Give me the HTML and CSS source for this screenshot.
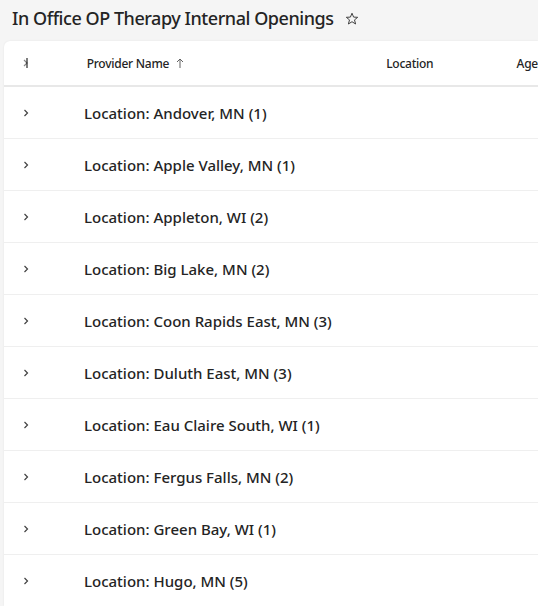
FILE: index.html
```html
<!DOCTYPE html>
<html>
<head>
<meta charset="utf-8">
<link rel="stylesheet" href="styles.css">
</head>
<body>
<div class="page">
  <div class="titlebar">
    <h1 class="title">In Office OP Therapy Internal Openings</h1>
    <svg class="star" width="14" height="14" viewBox="0 0 14 14"><path d="M7 1.2 L8.6 5.1 L12.7 5.3 L9.5 7.9 L10.6 12 L7 9.7 L3.4 12 L4.5 7.9 L1.3 5.3 L5.4 5.1 Z" fill="none" stroke="#424242" stroke-width="1" stroke-linejoin="round"/></svg>
  </div>
  <div class="card">
    <div class="header">
      <div class="col-exp">
        <span class="hdr-icon">
          <svg width="8" height="12" viewBox="0 0 8 12"><path d="M2 3 L5 6 L2 9" fill="none" stroke="#888" stroke-width="1.2"/><rect x="4.5" y="1" width="1" height="10" fill="#000"/></svg>
        </span>
      </div>
      <div class="col-name">Provider Name <svg class="arrow" width="8" height="11" viewBox="0 0 8 11"><path d="M4 1 V10 M1 4 L4 1 L7 4" fill="none" stroke="#616161" stroke-width="1"/></svg></div>
      <div class="col-loc">Location</div>
      <div class="col-age">Age</div>
    </div>
    <div class="rows">
      <div class="row"><span class="chev"><svg width="8" height="10" viewBox="0 0 8 10"><path d="M2.5 2 L5.5 5 L2.5 8" fill="none" stroke="#424242" stroke-width="1.2"/></svg></span><span class="group">Location: Andover, MN (1)</span></div>
      <div class="row"><span class="chev"><svg width="8" height="10" viewBox="0 0 8 10"><path d="M2.5 2 L5.5 5 L2.5 8" fill="none" stroke="#424242" stroke-width="1.2"/></svg></span><span class="group">Location: Apple Valley, MN (1)</span></div>
      <div class="row"><span class="chev"><svg width="8" height="10" viewBox="0 0 8 10"><path d="M2.5 2 L5.5 5 L2.5 8" fill="none" stroke="#424242" stroke-width="1.2"/></svg></span><span class="group">Location: Appleton, WI (2)</span></div>
      <div class="row"><span class="chev"><svg width="8" height="10" viewBox="0 0 8 10"><path d="M2.5 2 L5.5 5 L2.5 8" fill="none" stroke="#424242" stroke-width="1.2"/></svg></span><span class="group">Location: Big Lake, MN (2)</span></div>
      <div class="row"><span class="chev"><svg width="8" height="10" viewBox="0 0 8 10"><path d="M2.5 2 L5.5 5 L2.5 8" fill="none" stroke="#424242" stroke-width="1.2"/></svg></span><span class="group">Location: Coon Rapids East, MN (3)</span></div>
      <div class="row"><span class="chev"><svg width="8" height="10" viewBox="0 0 8 10"><path d="M2.5 2 L5.5 5 L2.5 8" fill="none" stroke="#424242" stroke-width="1.2"/></svg></span><span class="group">Location: Duluth East, MN (3)</span></div>
      <div class="row"><span class="chev"><svg width="8" height="10" viewBox="0 0 8 10"><path d="M2.5 2 L5.5 5 L2.5 8" fill="none" stroke="#424242" stroke-width="1.2"/></svg></span><span class="group">Location: Eau Claire South, WI (1)</span></div>
      <div class="row"><span class="chev"><svg width="8" height="10" viewBox="0 0 8 10"><path d="M2.5 2 L5.5 5 L2.5 8" fill="none" stroke="#424242" stroke-width="1.2"/></svg></span><span class="group">Location: Fergus Falls, MN (2)</span></div>
      <div class="row"><span class="chev"><svg width="8" height="10" viewBox="0 0 8 10"><path d="M2.5 2 L5.5 5 L2.5 8" fill="none" stroke="#424242" stroke-width="1.2"/></svg></span><span class="group">Location: Green Bay, WI (1)</span></div>
      <div class="row"><span class="chev"><svg width="8" height="10" viewBox="0 0 8 10"><path d="M2.5 2 L5.5 5 L2.5 8" fill="none" stroke="#424242" stroke-width="1.2"/></svg></span><span class="group">Location: Hugo, MN (5)</span></div>
    </div>
  </div>
</div>
</body>
</html>
```

FILE: styles.css
```css
html, body {
  margin: 0;
  padding: 0;
  background: #f5f5f5;
  overflow: hidden;
}
.page {
  width: 538px;
  height: 606px;
  font-family: "Noto Sans", "Open Sans", sans-serif;
  color: #242424;
}
.titlebar {
  height: 41px;
  display: flex;
  align-items: center;
  padding-left: 12px;
  box-sizing: border-box;
  padding-bottom: 6px;
}
.title {
  margin: 0;
  font-size: 18px;
  font-weight: 500;
  color: #242424;
  letter-spacing: -0.45px;
}
.star {
  margin-left: 11px;
  margin-top: 2px;
}
.card {
  margin-left: 4px;
  background: #fff;
  border-top-left-radius: 6px;
  box-shadow: 0 0 2px rgba(0,0,0,0.08);
  height: 565px;
}
.header {
  height: 44px;
  display: flex;
  align-items: center;
  border-bottom: 2px solid #e8e8e8;
  font-size: 12px;
  font-weight: 500;
  letter-spacing: -0.25px;
  color: #242424;
}
.col-exp {
  width: 83px;
  display: flex;
  padding-left: 18px;
  box-sizing: border-box;
}
.hdr-icon { display: flex; }
.col-name {
  width: 300px;
  display: flex;
  align-items: center;
}
.arrow {
  margin-left: 7px;
}
.col-loc {
  width: 130px;
  padding-left: 1px;
}
.col-age {
  white-space: nowrap;
  padding-left: 1px;
}
.row {
  height: 52px;
  box-sizing: border-box;
  border-bottom: 1px solid #efefef;
  display: flex;
  align-items: center;
}
.chev {
  width: 80px;
  padding-left: 18px;
  box-sizing: border-box;
  display: flex;
  margin-top: 0;
}
.group {
  font-size: 15px;
  font-weight: 500;
  color: #242424;
}
```
